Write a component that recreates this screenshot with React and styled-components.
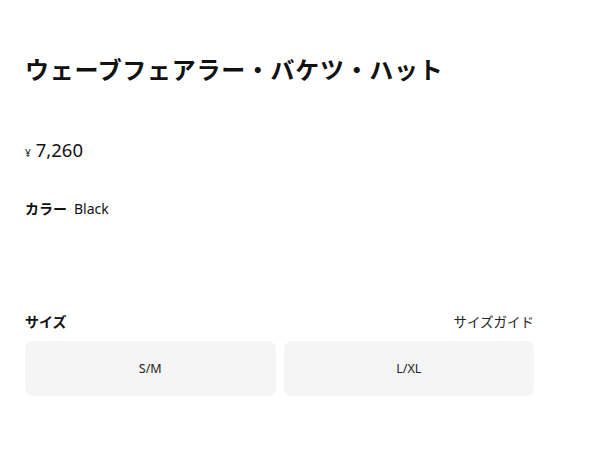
import React, { useState } from "react"
import styled, { createGlobalStyle } from "styled-components"

const GlobalStyle = createGlobalStyle`
  body {
    margin: 0;
    background: #fff;
    font-family: "Noto Sans CJK JP", "Noto Sans", sans-serif;
    color: #111;
  }
`

const Page = styled.div`
  width: 509px;
  padding: 52px 0 0 25px;
`

const Title = styled.h1`
  margin: 0;
  font-size: 24px;
  line-height: 34px;
  font-weight: 700;
  letter-spacing: 0.7px;
`

const Price = styled.div`
  margin-top: 51px;
  display: flex;
  align-items: baseline;
  font-family: "Noto Sans", sans-serif;
  font-size: 18.5px;
  line-height: 25px;
`

const Yen = styled.span`
  font-size: 10px;
  margin-right: 5px;
`

const ColorRow = styled.div`
  margin-top: 32px;
  display: flex;
  gap: 7px;
  font-size: 14px;
  line-height: 21px;
`

const Label = styled.span`
  font-weight: 700;
`

const Value = styled.span`
  font-family: "Noto Sans", sans-serif;
`

const SizeHeader = styled.div`
  margin-top: 92px;
  display: flex;
  justify-content: space-between;
  font-size: 14px;
  line-height: 21px;
`

const GuideLink = styled.a`
  color: #222;
  font-size: 13.5px;
  letter-spacing: 0;
  cursor: pointer;
`

const SizeGrid = styled.div`
  margin-top: 9px;
  display: grid;
  grid-template-columns: 1fr 1fr;
  gap: 8px;
`

const SizeButton = styled.button`
  height: 55px;
  border: 1px solid ${p => (p.$active ? "#111" : "transparent")};
  border-radius: 8px;
  background: #f5f5f5;
  font-family: "Noto Sans", sans-serif;
  font-size: 12.5px;
  color: #222;
  cursor: pointer;
`

const sizes = ["S/M", "L/XL"]

const App = () => {
  const [selected, setSelected] = useState(null)

  return (
    <>
      <GlobalStyle />
      <Page>
        <Title>ウェーブフェアラー・バケツ・ハット</Title>
        <Price>
          <Yen>¥</Yen>7,260
        </Price>
        <ColorRow>
          <Label>カラー</Label>
          <Value>Black</Value>
        </ColorRow>
        <SizeHeader>
          <Label>サイズ</Label>
          <GuideLink>サイズガイド</GuideLink>
        </SizeHeader>
        <SizeGrid>
          {sizes.map(s => (
            <SizeButton key={s} $active={selected === s} onClick={() => setSelected(s)}>
              {s}
            </SizeButton>
          ))}
        </SizeGrid>
      </Page>
    </>
  )
}

export default App
